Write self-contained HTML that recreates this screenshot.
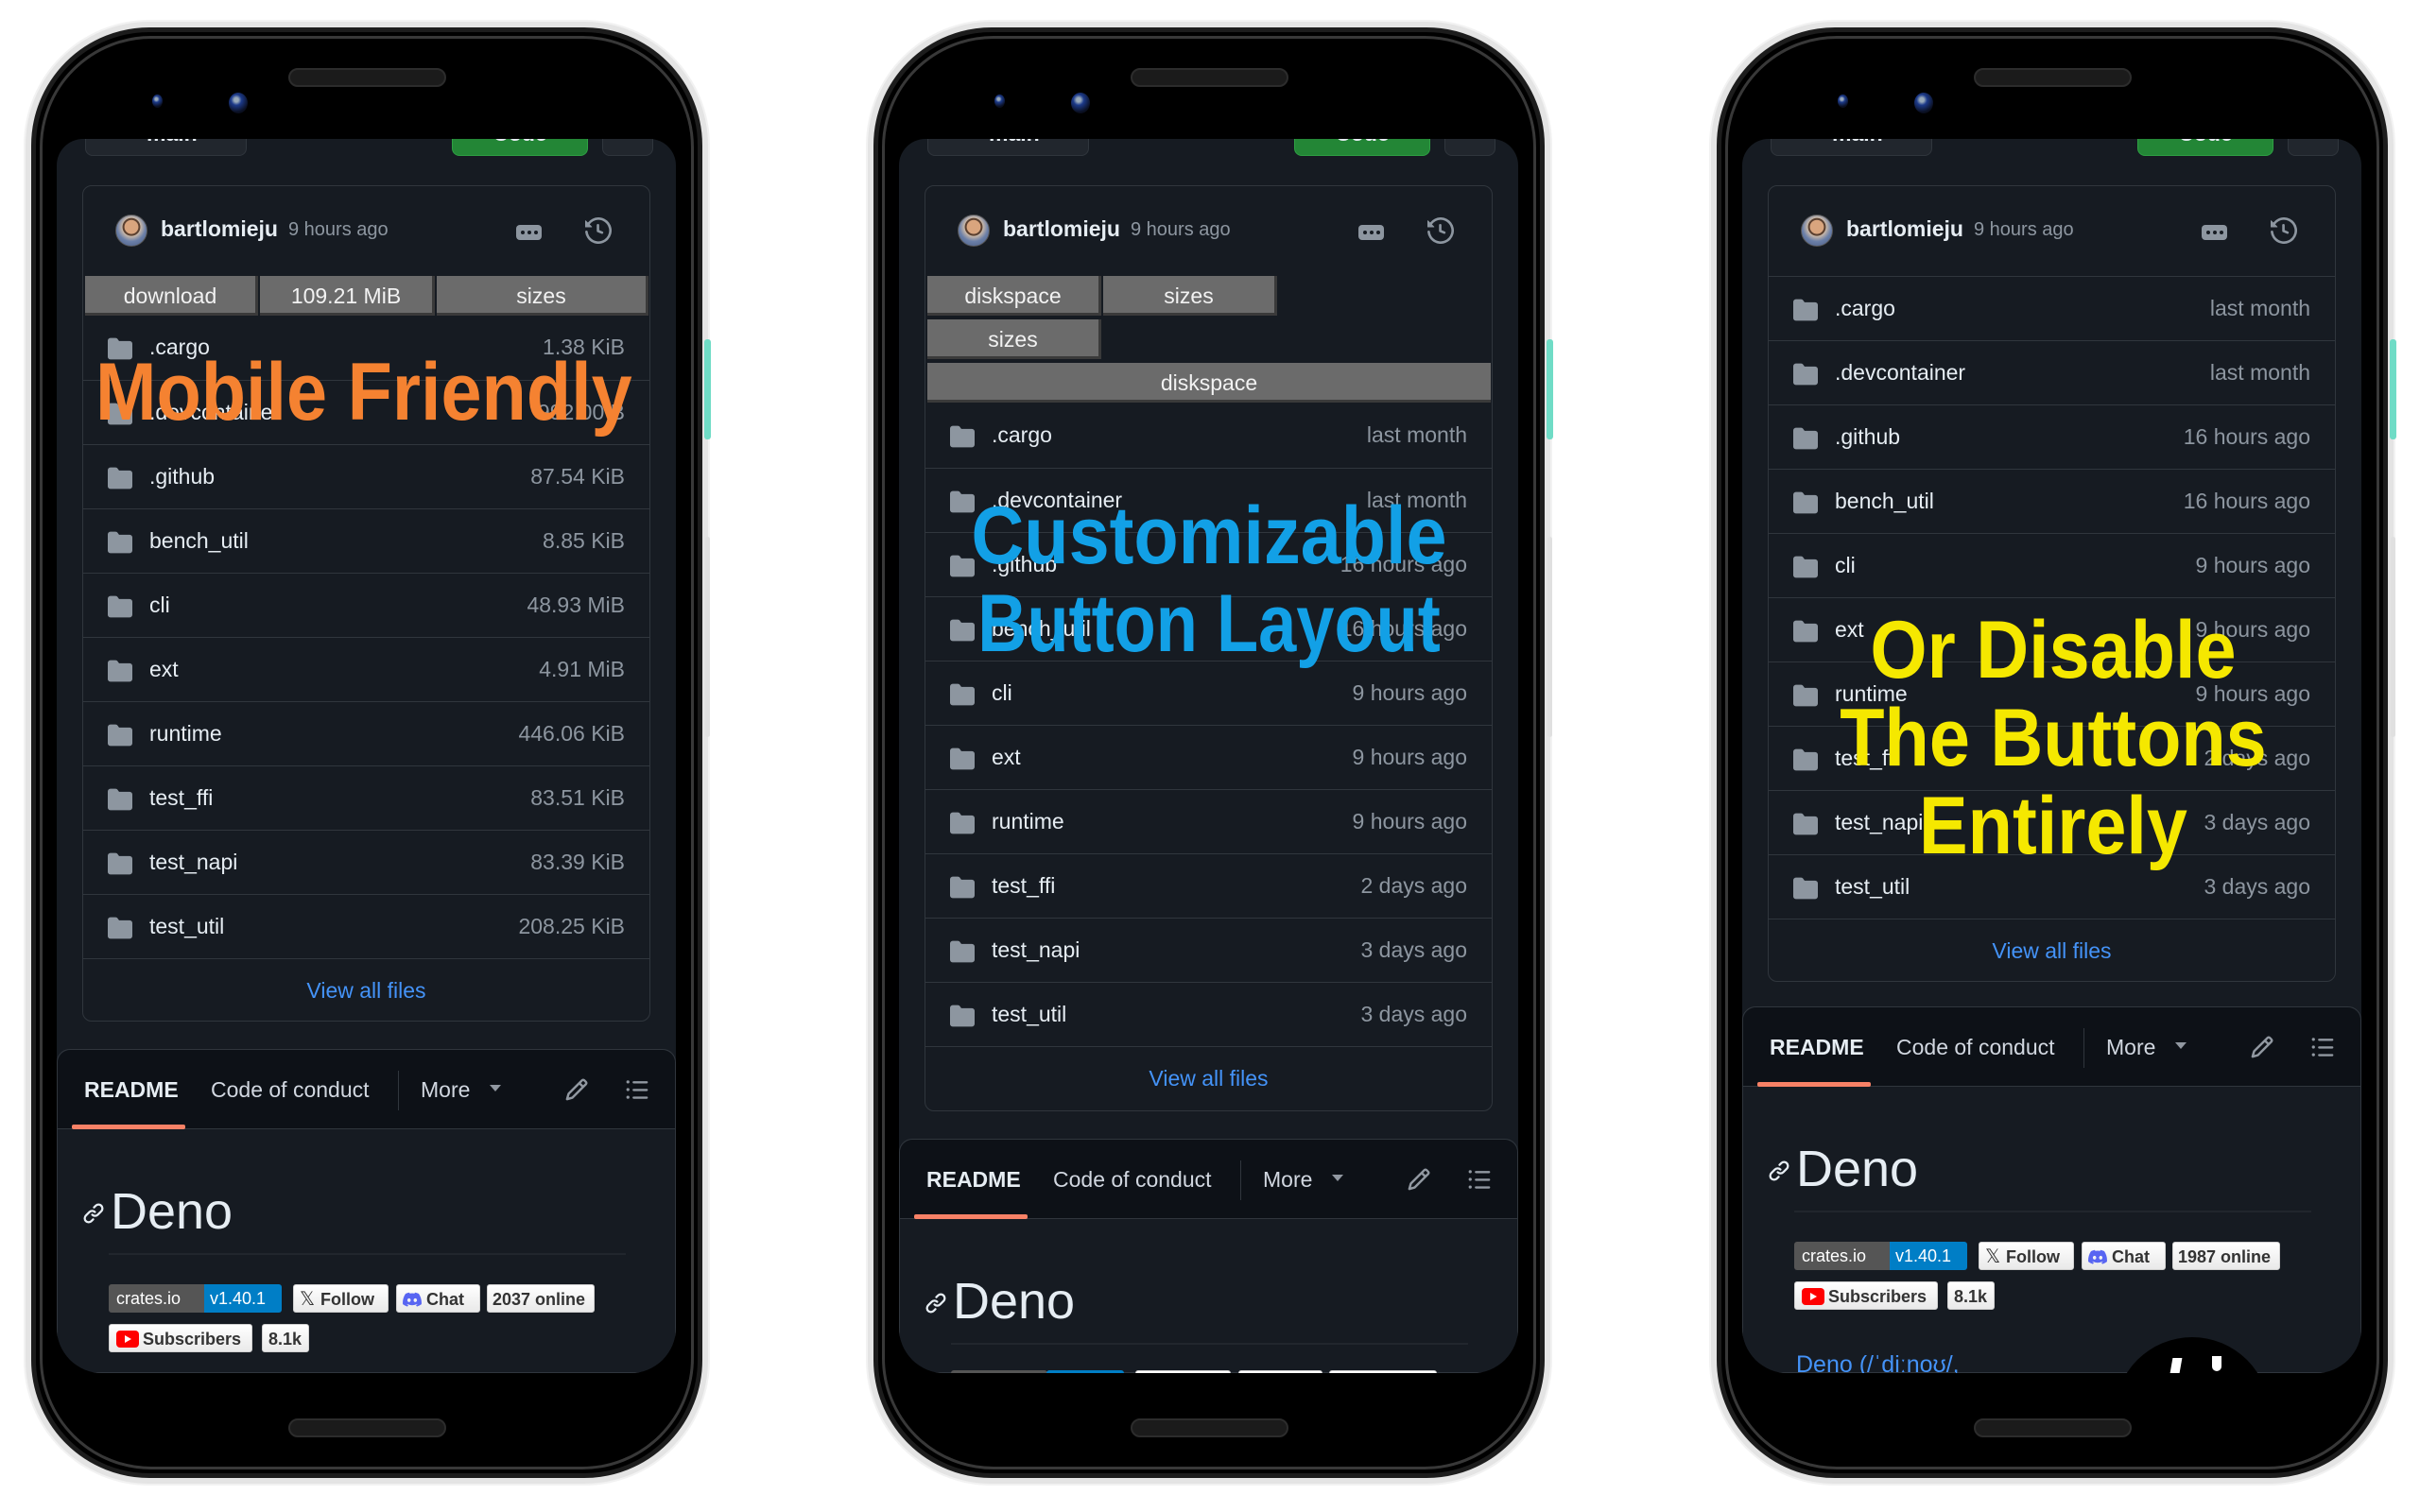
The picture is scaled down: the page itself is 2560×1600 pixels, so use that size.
<!DOCTYPE html>
<html style="width:2560px;height:1600px;overflow:hidden"><head><meta charset="utf-8">
<style>
*{box-sizing:border-box;margin:0;padding:0}
body{width:2560px;height:1600px;background:#fff;position:relative;overflow:hidden;font-family:"Liberation Sans",sans-serif}
.phone{position:absolute;top:29px;width:710px;height:1535px;border-radius:125px;background:#000;border:5px solid #1c1c1c;box-shadow:0 0 0 6px #e4e4e4,0 0 0 8px #f2f2f2;overflow:hidden}
.phone:before{content:"";position:absolute;inset:4px;border-radius:118px;border:3px solid #383838}
.spk{position:absolute;left:267px;width:167px;height:20px;border-radius:10px;background:#1b1b1b;border:2px solid #2c2c2c}
.cam{position:absolute;border-radius:50%;background:radial-gradient(circle at 40% 35%,#9ab 0 12%,#1c3a8a 30%,#0a0f20 70%);}
.side{position:absolute;border-radius:3px;z-index:5}
.screen{position:absolute;left:22px;top:113px;width:655px;height:1306px;background:#161b22;overflow:hidden;border-radius:28px 28px 48px 48px;color:#e6edf3}
.a{position:absolute}
.topbtn{position:absolute;top:-22px;height:40px;border:1px solid #30363d;border-radius:8px;background:#21262d;font-size:23px;color:#e6edf3;font-weight:bold;text-align:center;line-height:30px}
.card{position:absolute;left:27px;width:601px;border:1px solid #30363d;border-radius:10px;background:#161b22}
.hdr{position:absolute;left:0;top:0;width:100%;height:95px}
.av{position:absolute;left:34px;top:30px;width:34px;height:34px;border-radius:50%;background:radial-gradient(circle at 50% 38%,#d9a57e 0 28%,#5a4030 30% 36%,#c9b8a8 38%,#6a7fa8 60%,#4a5a80 100%);border:1px solid #555}
.nm{position:absolute;left:82px;top:32px;font-size:23px;font-weight:bold;color:#e6edf3}
.tm{position:absolute;left:217px;top:35px;font-size:20px;color:#8d96a0}
.kb{position:absolute;left:458px;top:41px;width:27px;height:16px;border-radius:4px;background:#8d96a0}
.kb i{position:absolute;top:6px;width:4px;height:4px;border-radius:50%;background:#161b22}
.hist{position:absolute;left:531px;top:33px}
.gb{position:absolute;height:42px;background:#6b6b6b;color:#f2f2f2;font-size:23px;text-align:center;line-height:42px;border-bottom:3px solid #3a3a3a;border-right:3px solid #3a3a3a}
.row{position:absolute;left:0;width:100%;height:68px;border-top:1px solid #30363d;font-size:23px}
.row svg{position:absolute;left:26px;top:22px}
.row .f{position:absolute;left:70px;top:20px;color:#e6edf3}
.row .r{position:absolute;right:26px;top:20px;color:#8d96a0}
.row .v{position:absolute;left:0;width:100%;text-align:center;top:20px;color:#4493f8}
.panel{position:absolute;left:0;width:655px;height:700px;border:1px solid #30363d;border-radius:14px;background:#161b22}
.ph{position:absolute;left:0;top:0;width:100%;height:84px;background:#0d1117;border-bottom:1px solid #30363d;border-radius:14px 14px 0 0;font-size:23px}
.ph span{position:absolute;top:29px;color:#e6edf3}
.ul{position:absolute;left:15px;top:79px;width:120px;height:5px;background:#f78166;border-radius:2px}
.dv{position:absolute;left:360px;top:22px;width:1px;height:42px;background:#30363d}
.deno{position:absolute;left:56px;font-size:54px;color:#e6edf3}
.hr{position:absolute;left:54px;width:547px;height:2px;background:#21262d}
.bd{position:absolute;height:30px;border-radius:3px;font-size:18px;line-height:30px;white-space:nowrap;overflow:hidden}
.bw{background:linear-gradient(#fff,#e9e9e9);border:1px solid #d0d0d0;color:#333;font-weight:bold}
.ov{position:absolute;font-weight:bold;font-size:86px;white-space:nowrap;line-height:1}
</style></head><body>

<!-- ============ PHONE 1 ============ -->
<div class="phone" style="left:33px">
 <div class="spk" style="top:38px"></div><div class="spk" style="top:1467px"></div>
 <div class="cam" style="left:123px;top:66px;width:11px;height:14px"></div>
 <div class="cam" style="left:204px;top:64px;width:20px;height:22px"></div>
 <div class="screen">
  <div class="topbtn" style="left:30px;width:171px">&nbsp;&nbsp;main</div>
  <div class="topbtn" style="left:418px;width:144px;background:#238636;border-color:#2ea043">Code</div>
  <div class="topbtn" style="left:577px;width:54px"></div>
  <div class="card" style="top:49px;height:885px">
   <div class="hdr"><div class="av"></div><div class="nm">bartlomieju</div><div class="tm">9 hours ago</div>
    <div class="kb"><i style="left:5px"></i><i style="left:12px"></i><i style="left:19px"></i></div>
    <svg class="hist" width="28" height="28" viewBox="0 0 16 16" fill="#8d96a0"><path d="m.427 1.927 1.215 1.215a8.002 8.002 0 1 1-1.6 5.685.75.75 0 1 1 1.493-.154 6.5 6.5 0 1 0 1.18-4.458l1.358 1.358A.25.25 0 0 1 3.896 6H.25A.25.25 0 0 1 0 5.75V2.104a.25.25 0 0 1 .427-.177ZM7.75 4a.75.75 0 0 1 .75.75v2.992l2.028.812a.75.75 0 0 1-.557 1.392l-2.5-1A.751.751 0 0 1 7 8.25v-3.5A.75.75 0 0 1 7.75 4Z"/></svg>
   </div>
   <div class="gb" style="left:2px;top:95px;width:183px">download</div>
   <div class="gb" style="left:187px;top:95px;width:185px">109.21 MiB</div>
   <div class="gb" style="left:374px;top:95px;width:224px">sizes</div>
   <div class="row" style="top:137px;border-top:none"><svg width="26" height="26" viewBox="0 0 16 16" fill="#8d96a0"><path d="M1.75 1A1.75 1.75 0 0 0 0 2.75v10.5C0 14.216.784 15 1.75 15h12.5A1.75 1.75 0 0 0 16 13.25v-8.5A1.75 1.75 0 0 0 14.25 3H7.5a.25.25 0 0 1-.2-.1l-.9-1.2C6.07 1.26 5.55 1 5 1H1.75Z"/></svg><span class="f">.cargo</span><span class="r">1.38 KiB</span></div>
   <div class="row" style="top:205px"><svg width="26" height="26" viewBox="0 0 16 16" fill="#8d96a0"><path d="M1.75 1A1.75 1.75 0 0 0 0 2.75v10.5C0 14.216.784 15 1.75 15h12.5A1.75 1.75 0 0 0 16 13.25v-8.5A1.75 1.75 0 0 0 14.25 3H7.5a.25.25 0 0 1-.2-.1l-.9-1.2C6.07 1.26 5.55 1 5 1H1.75Z"/></svg><span class="f">.devcontainer</span><span class="r">992.00 B</span></div>
   <div class="row" style="top:273px"><svg width="26" height="26" viewBox="0 0 16 16" fill="#8d96a0"><path d="M1.75 1A1.75 1.75 0 0 0 0 2.75v10.5C0 14.216.784 15 1.75 15h12.5A1.75 1.75 0 0 0 16 13.25v-8.5A1.75 1.75 0 0 0 14.25 3H7.5a.25.25 0 0 1-.2-.1l-.9-1.2C6.07 1.26 5.55 1 5 1H1.75Z"/></svg><span class="f">.github</span><span class="r">87.54 KiB</span></div>
   <div class="row" style="top:341px"><svg width="26" height="26" viewBox="0 0 16 16" fill="#8d96a0"><path d="M1.75 1A1.75 1.75 0 0 0 0 2.75v10.5C0 14.216.784 15 1.75 15h12.5A1.75 1.75 0 0 0 16 13.25v-8.5A1.75 1.75 0 0 0 14.25 3H7.5a.25.25 0 0 1-.2-.1l-.9-1.2C6.07 1.26 5.55 1 5 1H1.75Z"/></svg><span class="f">bench_util</span><span class="r">8.85 KiB</span></div>
   <div class="row" style="top:409px"><svg width="26" height="26" viewBox="0 0 16 16" fill="#8d96a0"><path d="M1.75 1A1.75 1.75 0 0 0 0 2.75v10.5C0 14.216.784 15 1.75 15h12.5A1.75 1.75 0 0 0 16 13.25v-8.5A1.75 1.75 0 0 0 14.25 3H7.5a.25.25 0 0 1-.2-.1l-.9-1.2C6.07 1.26 5.55 1 5 1H1.75Z"/></svg><span class="f">cli</span><span class="r">48.93 MiB</span></div>
   <div class="row" style="top:477px"><svg width="26" height="26" viewBox="0 0 16 16" fill="#8d96a0"><path d="M1.75 1A1.75 1.75 0 0 0 0 2.75v10.5C0 14.216.784 15 1.75 15h12.5A1.75 1.75 0 0 0 16 13.25v-8.5A1.75 1.75 0 0 0 14.25 3H7.5a.25.25 0 0 1-.2-.1l-.9-1.2C6.07 1.26 5.55 1 5 1H1.75Z"/></svg><span class="f">ext</span><span class="r">4.91 MiB</span></div>
   <div class="row" style="top:545px"><svg width="26" height="26" viewBox="0 0 16 16" fill="#8d96a0"><path d="M1.75 1A1.75 1.75 0 0 0 0 2.75v10.5C0 14.216.784 15 1.75 15h12.5A1.75 1.75 0 0 0 16 13.25v-8.5A1.75 1.75 0 0 0 14.25 3H7.5a.25.25 0 0 1-.2-.1l-.9-1.2C6.07 1.26 5.55 1 5 1H1.75Z"/></svg><span class="f">runtime</span><span class="r">446.06 KiB</span></div>
   <div class="row" style="top:613px"><svg width="26" height="26" viewBox="0 0 16 16" fill="#8d96a0"><path d="M1.75 1A1.75 1.75 0 0 0 0 2.75v10.5C0 14.216.784 15 1.75 15h12.5A1.75 1.75 0 0 0 16 13.25v-8.5A1.75 1.75 0 0 0 14.25 3H7.5a.25.25 0 0 1-.2-.1l-.9-1.2C6.07 1.26 5.55 1 5 1H1.75Z"/></svg><span class="f">test_ffi</span><span class="r">83.51 KiB</span></div>
   <div class="row" style="top:681px"><svg width="26" height="26" viewBox="0 0 16 16" fill="#8d96a0"><path d="M1.75 1A1.75 1.75 0 0 0 0 2.75v10.5C0 14.216.784 15 1.75 15h12.5A1.75 1.75 0 0 0 16 13.25v-8.5A1.75 1.75 0 0 0 14.25 3H7.5a.25.25 0 0 1-.2-.1l-.9-1.2C6.07 1.26 5.55 1 5 1H1.75Z"/></svg><span class="f">test_napi</span><span class="r">83.39 KiB</span></div>
   <div class="row" style="top:749px"><svg width="26" height="26" viewBox="0 0 16 16" fill="#8d96a0"><path d="M1.75 1A1.75 1.75 0 0 0 0 2.75v10.5C0 14.216.784 15 1.75 15h12.5A1.75 1.75 0 0 0 16 13.25v-8.5A1.75 1.75 0 0 0 14.25 3H7.5a.25.25 0 0 1-.2-.1l-.9-1.2C6.07 1.26 5.55 1 5 1H1.75Z"/></svg><span class="f">test_util</span><span class="r">208.25 KiB</span></div>
   <div class="row" style="top:817px"><span class="v">View all files</span></div>
  </div>
  <div class="panel" style="top:963px;height:343px">
   <div class="ph"><span style="left:28px;font-weight:bold">README</span><span style="left:162px;color:#d1d7e0">Code of conduct</span><div class="dv"></div><span style="left:384px;color:#d1d7e0">More</span>
    <svg class="a" style="left:456px;top:36px" width="14" height="10" viewBox="0 0 14 10"><path d="M1 1h12L7 8z" fill="#9198a1"/></svg>
    <svg class="a" style="left:536px;top:29px" width="26" height="26" viewBox="0 0 16 16" fill="#9198a1"><path d="M11.013 1.427a1.75 1.75 0 0 1 2.474 0l1.086 1.086a1.75 1.75 0 0 1 0 2.474l-8.61 8.61c-.21.21-.47.364-.756.445l-3.251.93a.75.75 0 0 1-.927-.928l.929-3.25c.081-.286.235-.547.445-.758l8.61-8.61Zm.176 4.823L9.75 4.81l-6.286 6.287a.253.253 0 0 0-.064.108l-.558 1.953 1.953-.558a.253.253 0 0 0 .108-.064Zm1.238-3.763a.25.25 0 0 0-.354 0L10.811 3.75l1.439 1.44 1.263-1.263a.25.25 0 0 0 0-.354Z"/></svg>
    <svg class="a" style="left:600px;top:29px" width="26" height="26" viewBox="0 0 16 16" fill="#9198a1"><path d="M5.75 2.5h8.5a.75.75 0 0 1 0 1.5h-8.5a.75.75 0 0 1 0-1.5Zm0 5h8.5a.75.75 0 0 1 0 1.5h-8.5a.75.75 0 0 1 0-1.5Zm0 5h8.5a.75.75 0 0 1 0 1.5h-8.5a.75.75 0 0 1 0-1.5ZM2 14a1 1 0 1 1 0-2 1 1 0 0 1 0 2Zm1-6a1 1 0 1 1-2 0 1 1 0 0 1 2 0ZM2 4a1 1 0 1 1 0-2 1 1 0 0 1 0 2Z"/></svg>
    <div class="ul"></div></div>
   <svg class="a" style="left:26px;top:161px" width="24" height="24" viewBox="0 0 16 16" fill="#e6edf3"><path d="m7.775 3.275 1.25-1.25a3.5 3.5 0 1 1 4.95 4.95l-2.5 2.5a3.5 3.5 0 0 1-4.95 0 .751.751 0 0 1 .018-1.042.751.751 0 0 1 1.042-.018 1.998 1.998 0 0 0 2.83 0l2.5-2.5a2.002 2.002 0 0 0-2.83-2.83l-1.25 1.25a.751.751 0 0 1-1.042-.018.751.751 0 0 1-.018-1.042Zm-4.69 9.64a1.998 1.998 0 0 0 2.83 0l1.25-1.25a.751.751 0 0 1 1.042.018.751.751 0 0 1 .018 1.042l-1.25 1.25a3.5 3.5 0 1 1-4.95-4.95l2.5-2.5a3.5 3.5 0 0 1 4.95 0 .751.751 0 0 1-.018 1.042.751.751 0 0 1-1.042.018 1.998 1.998 0 0 0-2.83 0l-2.5 2.5a1.998 1.998 0 0 0 0 2.83Z"/></svg>
   <div class="deno" style="top:140px">Deno</div>
   <div class="hr" style="top:215px"></div>
   <div class="bd" style="left:54px;top:248px;width:102px;background:#555;color:#fff;border-radius:3px 0 0 3px;padding-left:8px">crates.io</div>
   <div class="bd" style="left:155px;top:248px;width:82px;background:#007ec6;color:#fff;border-radius:0 3px 3px 0;padding-left:6px">v1.40.1</div>
   <div class="bd bw" style="left:249px;top:248px;width:101px;padding-left:28px"><span class="a" style="left:6px;font-size:20px;font-weight:normal">𝕏</span>Follow</div>
   <div class="bd bw" style="left:358px;top:248px;width:89px;padding-left:31px"><svg class="a" style="left:6px;top:7px" width="20" height="16" viewBox="0 0 20 16"><path d="M17 2a16 16 0 0 0-4-1.3l-.5 1a15 15 0 0 0-5 0L7 .7A16 16 0 0 0 3 2C.5 5.8-.2 9.5.1 13.1A16 16 0 0 0 5 15.6l1-1.6a10 10 0 0 1-1.6-.8l.4-.3a11.5 11.5 0 0 0 10.4 0l.4.3-1.6.8 1 1.6a16 16 0 0 0 4.9-2.5C20.2 8.9 19.2 5.3 17 2ZM6.7 10.9c-1 0-1.8-.9-1.8-2s.8-2 1.8-2 1.8.9 1.8 2-.8 2-1.8 2Zm6.6 0c-1 0-1.8-.9-1.8-2s.8-2 1.8-2 1.8.9 1.8 2-.8 2-1.8 2Z" fill="#5865f2"/></svg>Chat</div>
   <div class="bd bw" style="left:454px;top:248px;width:114px;padding-left:5px">2037 online</div>
   <div class="bd bw" style="left:54px;top:290px;width:152px;padding-left:35px"><svg class="a" style="left:7px;top:6px" width="24" height="18" viewBox="0 0 24 18"><rect width="24" height="18" rx="4" fill="#f00"/><path d="M9 5l7 4-7 4z" fill="#fff"/></svg>Subscribers</div>
   <div class="bd bw" style="left:216px;top:290px;width:50px;padding-left:6px">8.1k</div>
  </div>
 </div>
</div>

<!-- ============ PHONE 2 ============ -->
<div class="phone" style="left:924px">
 <div class="spk" style="top:38px"></div><div class="spk" style="top:1467px"></div>
 <div class="cam" style="left:123px;top:66px;width:11px;height:14px"></div>
 <div class="cam" style="left:204px;top:64px;width:20px;height:22px"></div>
 <div class="screen">
  <div class="topbtn" style="left:30px;width:171px">&nbsp;&nbsp;main</div>
  <div class="topbtn" style="left:418px;width:144px;background:#238636;border-color:#2ea043">Code</div>
  <div class="topbtn" style="left:577px;width:54px"></div>
  <div class="card" style="top:49px;height:980px">
   <div class="hdr"><div class="av"></div><div class="nm">bartlomieju</div><div class="tm">9 hours ago</div>
    <div class="kb"><i style="left:5px"></i><i style="left:12px"></i><i style="left:19px"></i></div>
    <svg class="hist" width="28" height="28" viewBox="0 0 16 16" fill="#8d96a0"><path d="m.427 1.927 1.215 1.215a8.002 8.002 0 1 1-1.6 5.685.75.75 0 1 1 1.493-.154 6.5 6.5 0 1 0 1.18-4.458l1.358 1.358A.25.25 0 0 1 3.896 6H.25A.25.25 0 0 1 0 5.75V2.104a.25.25 0 0 1 .427-.177ZM7.75 4a.75.75 0 0 1 .75.75v2.992l2.028.812a.75.75 0 0 1-.557 1.392l-2.5-1A.751.751 0 0 1 7 8.25v-3.5A.75.75 0 0 1 7.75 4Z"/></svg>
   </div>
   <div class="gb" style="left:2px;top:95px;width:184px">diskspace</div>
   <div class="gb" style="left:188px;top:95px;width:184px">sizes</div>
   <div class="gb" style="left:2px;top:141px;width:184px">sizes</div>
   <div class="gb" style="left:2px;top:187px;width:596px;border-right:none">diskspace</div>
   <div class="row" style="top:230px;border-top:none"><svg width="26" height="26" viewBox="0 0 16 16" fill="#8d96a0"><path d="M1.75 1A1.75 1.75 0 0 0 0 2.75v10.5C0 14.216.784 15 1.75 15h12.5A1.75 1.75 0 0 0 16 13.25v-8.5A1.75 1.75 0 0 0 14.25 3H7.5a.25.25 0 0 1-.2-.1l-.9-1.2C6.07 1.26 5.55 1 5 1H1.75Z"/></svg><span class="f">.cargo</span><span class="r">last month</span></div>
   <div class="row" style="top:298px"><svg width="26" height="26" viewBox="0 0 16 16" fill="#8d96a0"><path d="M1.75 1A1.75 1.75 0 0 0 0 2.75v10.5C0 14.216.784 15 1.75 15h12.5A1.75 1.75 0 0 0 16 13.25v-8.5A1.75 1.75 0 0 0 14.25 3H7.5a.25.25 0 0 1-.2-.1l-.9-1.2C6.07 1.26 5.55 1 5 1H1.75Z"/></svg><span class="f">.devcontainer</span><span class="r">last month</span></div>
   <div class="row" style="top:366px"><svg width="26" height="26" viewBox="0 0 16 16" fill="#8d96a0"><path d="M1.75 1A1.75 1.75 0 0 0 0 2.75v10.5C0 14.216.784 15 1.75 15h12.5A1.75 1.75 0 0 0 16 13.25v-8.5A1.75 1.75 0 0 0 14.25 3H7.5a.25.25 0 0 1-.2-.1l-.9-1.2C6.07 1.26 5.55 1 5 1H1.75Z"/></svg><span class="f">.github</span><span class="r">16 hours ago</span></div>
   <div class="row" style="top:434px"><svg width="26" height="26" viewBox="0 0 16 16" fill="#8d96a0"><path d="M1.75 1A1.75 1.75 0 0 0 0 2.75v10.5C0 14.216.784 15 1.75 15h12.5A1.75 1.75 0 0 0 16 13.25v-8.5A1.75 1.75 0 0 0 14.25 3H7.5a.25.25 0 0 1-.2-.1l-.9-1.2C6.07 1.26 5.55 1 5 1H1.75Z"/></svg><span class="f">bench_util</span><span class="r">16 hours ago</span></div>
   <div class="row" style="top:502px"><svg width="26" height="26" viewBox="0 0 16 16" fill="#8d96a0"><path d="M1.75 1A1.75 1.75 0 0 0 0 2.75v10.5C0 14.216.784 15 1.75 15h12.5A1.75 1.75 0 0 0 16 13.25v-8.5A1.75 1.75 0 0 0 14.25 3H7.5a.25.25 0 0 1-.2-.1l-.9-1.2C6.07 1.26 5.55 1 5 1H1.75Z"/></svg><span class="f">cli</span><span class="r">9 hours ago</span></div>
   <div class="row" style="top:570px"><svg width="26" height="26" viewBox="0 0 16 16" fill="#8d96a0"><path d="M1.75 1A1.75 1.75 0 0 0 0 2.75v10.5C0 14.216.784 15 1.75 15h12.5A1.75 1.75 0 0 0 16 13.25v-8.5A1.75 1.75 0 0 0 14.25 3H7.5a.25.25 0 0 1-.2-.1l-.9-1.2C6.07 1.26 5.55 1 5 1H1.75Z"/></svg><span class="f">ext</span><span class="r">9 hours ago</span></div>
   <div class="row" style="top:638px"><svg width="26" height="26" viewBox="0 0 16 16" fill="#8d96a0"><path d="M1.75 1A1.75 1.75 0 0 0 0 2.75v10.5C0 14.216.784 15 1.75 15h12.5A1.75 1.75 0 0 0 16 13.25v-8.5A1.75 1.75 0 0 0 14.25 3H7.5a.25.25 0 0 1-.2-.1l-.9-1.2C6.07 1.26 5.55 1 5 1H1.75Z"/></svg><span class="f">runtime</span><span class="r">9 hours ago</span></div>
   <div class="row" style="top:706px"><svg width="26" height="26" viewBox="0 0 16 16" fill="#8d96a0"><path d="M1.75 1A1.75 1.75 0 0 0 0 2.75v10.5C0 14.216.784 15 1.75 15h12.5A1.75 1.75 0 0 0 16 13.25v-8.5A1.75 1.75 0 0 0 14.25 3H7.5a.25.25 0 0 1-.2-.1l-.9-1.2C6.07 1.26 5.55 1 5 1H1.75Z"/></svg><span class="f">test_ffi</span><span class="r">2 days ago</span></div>
   <div class="row" style="top:774px"><svg width="26" height="26" viewBox="0 0 16 16" fill="#8d96a0"><path d="M1.75 1A1.75 1.75 0 0 0 0 2.75v10.5C0 14.216.784 15 1.75 15h12.5A1.75 1.75 0 0 0 16 13.25v-8.5A1.75 1.75 0 0 0 14.25 3H7.5a.25.25 0 0 1-.2-.1l-.9-1.2C6.07 1.26 5.55 1 5 1H1.75Z"/></svg><span class="f">test_napi</span><span class="r">3 days ago</span></div>
   <div class="row" style="top:842px"><svg width="26" height="26" viewBox="0 0 16 16" fill="#8d96a0"><path d="M1.75 1A1.75 1.75 0 0 0 0 2.75v10.5C0 14.216.784 15 1.75 15h12.5A1.75 1.75 0 0 0 16 13.25v-8.5A1.75 1.75 0 0 0 14.25 3H7.5a.25.25 0 0 1-.2-.1l-.9-1.2C6.07 1.26 5.55 1 5 1H1.75Z"/></svg><span class="f">test_util</span><span class="r">3 days ago</span></div>
   <div class="row" style="top:910px"><span class="v">View all files</span></div>
  </div>
  <div class="panel" style="top:1058px;height:248px">
   <div class="ph"><span style="left:28px;font-weight:bold">README</span><span style="left:162px;color:#d1d7e0">Code of conduct</span><div class="dv"></div><span style="left:384px;color:#d1d7e0">More</span>
    <svg class="a" style="left:456px;top:36px" width="14" height="10" viewBox="0 0 14 10"><path d="M1 1h12L7 8z" fill="#9198a1"/></svg>
    <svg class="a" style="left:536px;top:29px" width="26" height="26" viewBox="0 0 16 16" fill="#9198a1"><path d="M11.013 1.427a1.75 1.75 0 0 1 2.474 0l1.086 1.086a1.75 1.75 0 0 1 0 2.474l-8.61 8.61c-.21.21-.47.364-.756.445l-3.251.93a.75.75 0 0 1-.927-.928l.929-3.25c.081-.286.235-.547.445-.758l8.61-8.61Zm.176 4.823L9.75 4.81l-6.286 6.287a.253.253 0 0 0-.064.108l-.558 1.953 1.953-.558a.253.253 0 0 0 .108-.064Zm1.238-3.763a.25.25 0 0 0-.354 0L10.811 3.75l1.439 1.44 1.263-1.263a.25.25 0 0 0 0-.354Z"/></svg>
    <svg class="a" style="left:600px;top:29px" width="26" height="26" viewBox="0 0 16 16" fill="#9198a1"><path d="M5.75 2.5h8.5a.75.75 0 0 1 0 1.5h-8.5a.75.75 0 0 1 0-1.5Zm0 5h8.5a.75.75 0 0 1 0 1.5h-8.5a.75.75 0 0 1 0-1.5Zm0 5h8.5a.75.75 0 0 1 0 1.5h-8.5a.75.75 0 0 1 0-1.5ZM2 14a1 1 0 1 1 0-2 1 1 0 0 1 0 2Zm1-6a1 1 0 1 1-2 0 1 1 0 0 1 2 0ZM2 4a1 1 0 1 1 0-2 1 1 0 0 1 0 2Z"/></svg>
    <div class="ul"></div></div>
   <svg class="a" style="left:26px;top:161px" width="24" height="24" viewBox="0 0 16 16" fill="#e6edf3"><path d="m7.775 3.275 1.25-1.25a3.5 3.5 0 1 1 4.95 4.95l-2.5 2.5a3.5 3.5 0 0 1-4.95 0 .751.751 0 0 1 .018-1.042.751.751 0 0 1 1.042-.018 1.998 1.998 0 0 0 2.83 0l2.5-2.5a2.002 2.002 0 0 0-2.83-2.83l-1.25 1.25a.751.751 0 0 1-1.042-.018.751.751 0 0 1-.018-1.042Zm-4.69 9.64a1.998 1.998 0 0 0 2.83 0l1.25-1.25a.751.751 0 0 1 1.042.018.751.751 0 0 1 .018 1.042l-1.25 1.25a3.5 3.5 0 1 1-4.95-4.95l2.5-2.5a3.5 3.5 0 0 1 4.95 0 .751.751 0 0 1-.018 1.042.751.751 0 0 1-1.042.018 1.998 1.998 0 0 0-2.83 0l-2.5 2.5a1.998 1.998 0 0 0 0 2.83Z"/></svg>
   <div class="deno" style="top:140px">Deno</div>
   <div class="hr" style="top:215px"></div>
   <div class="bd" style="left:54px;top:244px;width:102px;background:#555"></div>
   <div class="bd" style="left:155px;top:244px;width:82px;background:#007ec6"></div>
   <div class="bd bw" style="left:249px;top:244px;width:101px"></div>
   <div class="bd bw" style="left:358px;top:244px;width:89px"></div>
   <div class="bd bw" style="left:454px;top:244px;width:114px"></div>
  </div>
 </div>
</div>

<!-- ============ PHONE 3 ============ -->
<div class="phone" style="left:1816px">
 <div class="spk" style="top:38px"></div><div class="spk" style="top:1467px"></div>
 <div class="cam" style="left:123px;top:66px;width:11px;height:14px"></div>
 <div class="cam" style="left:204px;top:64px;width:20px;height:22px"></div>
 <div class="screen">
  <div class="topbtn" style="left:30px;width:171px">&nbsp;&nbsp;main</div>
  <div class="topbtn" style="left:418px;width:144px;background:#238636;border-color:#2ea043">Code</div>
  <div class="topbtn" style="left:577px;width:54px"></div>
  <div class="card" style="top:49px;height:843px">
   <div class="hdr"><div class="av"></div><div class="nm">bartlomieju</div><div class="tm">9 hours ago</div>
    <div class="kb"><i style="left:5px"></i><i style="left:12px"></i><i style="left:19px"></i></div>
    <svg class="hist" width="28" height="28" viewBox="0 0 16 16" fill="#8d96a0"><path d="m.427 1.927 1.215 1.215a8.002 8.002 0 1 1-1.6 5.685.75.75 0 1 1 1.493-.154 6.5 6.5 0 1 0 1.18-4.458l1.358 1.358A.25.25 0 0 1 3.896 6H.25A.25.25 0 0 1 0 5.75V2.104a.25.25 0 0 1 .427-.177ZM7.75 4a.75.75 0 0 1 .75.75v2.992l2.028.812a.75.75 0 0 1-.557 1.392l-2.5-1A.751.751 0 0 1 7 8.25v-3.5A.75.75 0 0 1 7.75 4Z"/></svg>
   </div>
   <div class="row" style="top:95px"><svg width="26" height="26" viewBox="0 0 16 16" fill="#8d96a0"><path d="M1.75 1A1.75 1.75 0 0 0 0 2.75v10.5C0 14.216.784 15 1.75 15h12.5A1.75 1.75 0 0 0 16 13.25v-8.5A1.75 1.75 0 0 0 14.25 3H7.5a.25.25 0 0 1-.2-.1l-.9-1.2C6.07 1.26 5.55 1 5 1H1.75Z"/></svg><span class="f">.cargo</span><span class="r">last month</span></div>
   <div class="row" style="top:163px"><svg width="26" height="26" viewBox="0 0 16 16" fill="#8d96a0"><path d="M1.75 1A1.75 1.75 0 0 0 0 2.75v10.5C0 14.216.784 15 1.75 15h12.5A1.75 1.75 0 0 0 16 13.25v-8.5A1.75 1.75 0 0 0 14.25 3H7.5a.25.25 0 0 1-.2-.1l-.9-1.2C6.07 1.26 5.55 1 5 1H1.75Z"/></svg><span class="f">.devcontainer</span><span class="r">last month</span></div>
   <div class="row" style="top:231px"><svg width="26" height="26" viewBox="0 0 16 16" fill="#8d96a0"><path d="M1.75 1A1.75 1.75 0 0 0 0 2.75v10.5C0 14.216.784 15 1.75 15h12.5A1.75 1.75 0 0 0 16 13.25v-8.5A1.75 1.75 0 0 0 14.25 3H7.5a.25.25 0 0 1-.2-.1l-.9-1.2C6.07 1.26 5.55 1 5 1H1.75Z"/></svg><span class="f">.github</span><span class="r">16 hours ago</span></div>
   <div class="row" style="top:299px"><svg width="26" height="26" viewBox="0 0 16 16" fill="#8d96a0"><path d="M1.75 1A1.75 1.75 0 0 0 0 2.75v10.5C0 14.216.784 15 1.75 15h12.5A1.75 1.75 0 0 0 16 13.25v-8.5A1.75 1.75 0 0 0 14.25 3H7.5a.25.25 0 0 1-.2-.1l-.9-1.2C6.07 1.26 5.55 1 5 1H1.75Z"/></svg><span class="f">bench_util</span><span class="r">16 hours ago</span></div>
   <div class="row" style="top:367px"><svg width="26" height="26" viewBox="0 0 16 16" fill="#8d96a0"><path d="M1.75 1A1.75 1.75 0 0 0 0 2.75v10.5C0 14.216.784 15 1.75 15h12.5A1.75 1.75 0 0 0 16 13.25v-8.5A1.75 1.75 0 0 0 14.25 3H7.5a.25.25 0 0 1-.2-.1l-.9-1.2C6.07 1.26 5.55 1 5 1H1.75Z"/></svg><span class="f">cli</span><span class="r">9 hours ago</span></div>
   <div class="row" style="top:435px"><svg width="26" height="26" viewBox="0 0 16 16" fill="#8d96a0"><path d="M1.75 1A1.75 1.75 0 0 0 0 2.75v10.5C0 14.216.784 15 1.75 15h12.5A1.75 1.75 0 0 0 16 13.25v-8.5A1.75 1.75 0 0 0 14.25 3H7.5a.25.25 0 0 1-.2-.1l-.9-1.2C6.07 1.26 5.55 1 5 1H1.75Z"/></svg><span class="f">ext</span><span class="r">9 hours ago</span></div>
   <div class="row" style="top:503px"><svg width="26" height="26" viewBox="0 0 16 16" fill="#8d96a0"><path d="M1.75 1A1.75 1.75 0 0 0 0 2.75v10.5C0 14.216.784 15 1.75 15h12.5A1.75 1.75 0 0 0 16 13.25v-8.5A1.75 1.75 0 0 0 14.25 3H7.5a.25.25 0 0 1-.2-.1l-.9-1.2C6.07 1.26 5.55 1 5 1H1.75Z"/></svg><span class="f">runtime</span><span class="r">9 hours ago</span></div>
   <div class="row" style="top:571px"><svg width="26" height="26" viewBox="0 0 16 16" fill="#8d96a0"><path d="M1.75 1A1.75 1.75 0 0 0 0 2.75v10.5C0 14.216.784 15 1.75 15h12.5A1.75 1.75 0 0 0 16 13.25v-8.5A1.75 1.75 0 0 0 14.25 3H7.5a.25.25 0 0 1-.2-.1l-.9-1.2C6.07 1.26 5.55 1 5 1H1.75Z"/></svg><span class="f">test_ffi</span><span class="r">2 days ago</span></div>
   <div class="row" style="top:639px"><svg width="26" height="26" viewBox="0 0 16 16" fill="#8d96a0"><path d="M1.75 1A1.75 1.75 0 0 0 0 2.75v10.5C0 14.216.784 15 1.75 15h12.5A1.75 1.75 0 0 0 16 13.25v-8.5A1.75 1.75 0 0 0 14.25 3H7.5a.25.25 0 0 1-.2-.1l-.9-1.2C6.07 1.26 5.55 1 5 1H1.75Z"/></svg><span class="f">test_napi</span><span class="r">3 days ago</span></div>
   <div class="row" style="top:707px"><svg width="26" height="26" viewBox="0 0 16 16" fill="#8d96a0"><path d="M1.75 1A1.75 1.75 0 0 0 0 2.75v10.5C0 14.216.784 15 1.75 15h12.5A1.75 1.75 0 0 0 16 13.25v-8.5A1.75 1.75 0 0 0 14.25 3H7.5a.25.25 0 0 1-.2-.1l-.9-1.2C6.07 1.26 5.55 1 5 1H1.75Z"/></svg><span class="f">test_util</span><span class="r">3 days ago</span></div>
   <div class="row" style="top:775px"><span class="v">View all files</span></div>
  </div>
  <div class="panel" style="top:918px;height:388px">
   <div class="ph"><span style="left:28px;font-weight:bold">README</span><span style="left:162px;color:#d1d7e0">Code of conduct</span><div class="dv"></div><span style="left:384px;color:#d1d7e0">More</span>
    <svg class="a" style="left:456px;top:36px" width="14" height="10" viewBox="0 0 14 10"><path d="M1 1h12L7 8z" fill="#9198a1"/></svg>
    <svg class="a" style="left:536px;top:29px" width="26" height="26" viewBox="0 0 16 16" fill="#9198a1"><path d="M11.013 1.427a1.75 1.75 0 0 1 2.474 0l1.086 1.086a1.75 1.75 0 0 1 0 2.474l-8.61 8.61c-.21.21-.47.364-.756.445l-3.251.93a.75.75 0 0 1-.927-.928l.929-3.25c.081-.286.235-.547.445-.758l8.61-8.61Zm.176 4.823L9.75 4.81l-6.286 6.287a.253.253 0 0 0-.064.108l-.558 1.953 1.953-.558a.253.253 0 0 0 .108-.064Zm1.238-3.763a.25.25 0 0 0-.354 0L10.811 3.75l1.439 1.44 1.263-1.263a.25.25 0 0 0 0-.354Z"/></svg>
    <svg class="a" style="left:600px;top:29px" width="26" height="26" viewBox="0 0 16 16" fill="#9198a1"><path d="M5.75 2.5h8.5a.75.75 0 0 1 0 1.5h-8.5a.75.75 0 0 1 0-1.5Zm0 5h8.5a.75.75 0 0 1 0 1.5h-8.5a.75.75 0 0 1 0-1.5Zm0 5h8.5a.75.75 0 0 1 0 1.5h-8.5a.75.75 0 0 1 0-1.5ZM2 14a1 1 0 1 1 0-2 1 1 0 0 1 0 2Zm1-6a1 1 0 1 1-2 0 1 1 0 0 1 2 0ZM2 4a1 1 0 1 1 0-2 1 1 0 0 1 0 2Z"/></svg>
    <div class="ul"></div></div>
   <svg class="a" style="left:26px;top:161px" width="24" height="24" viewBox="0 0 16 16" fill="#e6edf3"><path d="m7.775 3.275 1.25-1.25a3.5 3.5 0 1 1 4.95 4.95l-2.5 2.5a3.5 3.5 0 0 1-4.95 0 .751.751 0 0 1 .018-1.042.751.751 0 0 1 1.042-.018 1.998 1.998 0 0 0 2.83 0l2.5-2.5a2.002 2.002 0 0 0-2.83-2.83l-1.25 1.25a.751.751 0 0 1-1.042-.018.751.751 0 0 1-.018-1.042Zm-4.69 9.64a1.998 1.998 0 0 0 2.83 0l1.25-1.25a.751.751 0 0 1 1.042.018.751.751 0 0 1 .018 1.042l-1.25 1.25a3.5 3.5 0 1 1-4.95-4.95l2.5-2.5a3.5 3.5 0 0 1 4.95 0 .751.751 0 0 1-.018 1.042.751.751 0 0 1-1.042.018 1.998 1.998 0 0 0-2.83 0l-2.5 2.5a1.998 1.998 0 0 0 0 2.83Z"/></svg>
   <div class="deno" style="top:140px">Deno</div>
   <div class="hr" style="top:215px"></div>
   <div class="bd" style="left:54px;top:248px;width:102px;background:#555;color:#fff;border-radius:3px 0 0 3px;padding-left:8px">crates.io</div>
   <div class="bd" style="left:155px;top:248px;width:82px;background:#007ec6;color:#fff;border-radius:0 3px 3px 0;padding-left:6px">v1.40.1</div>
   <div class="bd bw" style="left:249px;top:248px;width:101px;padding-left:28px"><span class="a" style="left:6px;font-size:20px;font-weight:normal">𝕏</span>Follow</div>
   <div class="bd bw" style="left:358px;top:248px;width:89px;padding-left:31px"><svg class="a" style="left:6px;top:7px" width="20" height="16" viewBox="0 0 20 16"><path d="M17 2a16 16 0 0 0-4-1.3l-.5 1a15 15 0 0 0-5 0L7 .7A16 16 0 0 0 3 2C.5 5.8-.2 9.5.1 13.1A16 16 0 0 0 5 15.6l1-1.6a10 10 0 0 1-1.6-.8l.4-.3a11.5 11.5 0 0 0 10.4 0l.4.3-1.6.8 1 1.6a16 16 0 0 0 4.9-2.5C20.2 8.9 19.2 5.3 17 2ZM6.7 10.9c-1 0-1.8-.9-1.8-2s.8-2 1.8-2 1.8.9 1.8 2-.8 2-1.8 2Zm6.6 0c-1 0-1.8-.9-1.8-2s.8-2 1.8-2 1.8.9 1.8 2-.8 2-1.8 2Z" fill="#5865f2"/></svg>Chat</div>
   <div class="bd bw" style="left:454px;top:248px;width:114px;padding-left:5px">1987 online</div>
   <div class="bd bw" style="left:54px;top:290px;width:152px;padding-left:35px"><svg class="a" style="left:7px;top:6px" width="24" height="18" viewBox="0 0 24 18"><rect width="24" height="18" rx="4" fill="#f00"/><path d="M9 5l7 4-7 4z" fill="#fff"/></svg>Subscribers</div>
   <div class="bd bw" style="left:216px;top:290px;width:50px;padding-left:6px">8.1k</div>
   <div class="a" style="left:56px;top:364px;font-size:25px;color:#4493f8;white-space:nowrap">Deno (/ˈdiːnoʊ/,</div>
  </div>
  <div class="a" style="left:394px;top:1268px;width:164px;height:82px;border-radius:82px 82px 0 0;background:#000"></div>
  <div class="a" style="left:454px;top:1290px;width:10px;height:16px;background:#fff;transform:skewX(-10deg)"></div>
  <div class="a" style="left:497px;top:1288px;width:10px;height:16px;background:#fff;border-radius:0 0 5px 5px"></div>
 </div>
</div>

<!-- side buttons (on top) -->
<div class="side" style="left:745px;top:359px;width:7px;height:106px;background:#6fdcc6"></div>
<div class="side" style="left:746px;top:568px;width:5px;height:212px;background:#e0e0e0"></div>
<div class="side" style="left:1636px;top:359px;width:7px;height:106px;background:#6fdcc6"></div>
<div class="side" style="left:1637px;top:568px;width:5px;height:212px;background:#e0e0e0"></div>
<div class="side" style="left:2528px;top:359px;width:7px;height:106px;background:#6fdcc6"></div>
<div class="side" style="left:2529px;top:568px;width:5px;height:212px;background:#e0e0e0"></div>

<!-- ============ OVERLAY TEXT ============ -->
<div class="ov" style="left:101px;top:372px;color:#f58231;transform:scaleX(0.9);transform-origin:left top">Mobile Friendly</div>
<div class="ov" style="left:979px;top:524px;width:600px;text-align:center;color:#12a0e6;transform:scaleX(0.9)">Customizable</div>
<div class="ov" style="left:979px;top:617px;width:600px;text-align:center;color:#12a0e6;transform:scaleX(0.84)">Button Layout</div>
<div class="ov" style="left:1872px;top:645px;width:600px;text-align:center;color:#f5e800;transform:scaleX(0.9)">Or Disable</div>
<div class="ov" style="left:1872px;top:738px;width:600px;text-align:center;color:#f5e800;transform:scaleX(0.9)">The Buttons</div>
<div class="ov" style="left:1872px;top:831px;width:600px;text-align:center;color:#f5e800;transform:scaleX(0.9)">Entirely</div>
</body></html>
